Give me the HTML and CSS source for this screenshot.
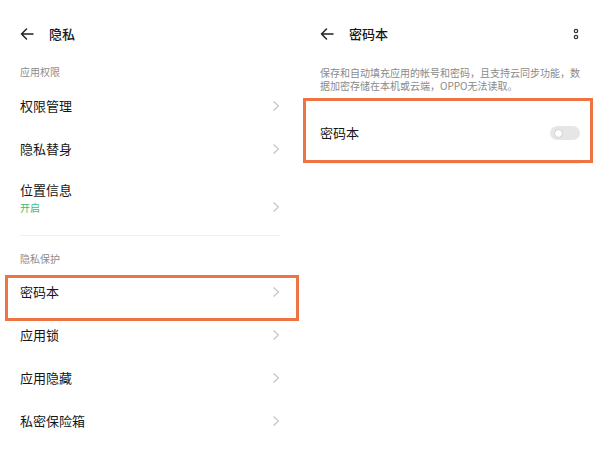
FILE: index.html
```html
<!DOCTYPE html>
<html lang="zh">
<head>
<meta charset="utf-8">
<link rel="stylesheet" href="styles.css">
</head>
<body>
<div class="screens">
  <section class="panel">
    <header class="topbar">
      <svg class="back" width="14" height="12" viewBox="0 0 14 12"><path d="M13 6H1.5M6.5 1L1.5 6l5 5" fill="none" stroke="#222" stroke-width="1.5" stroke-linecap="round" stroke-linejoin="round"/></svg>
      <span class="title">隐私</span>
    </header>
    <div class="group-title first">应用权限</div>
    <div class="row"><span class="label">权限管理</span><svg class="chev" width="8" height="12" viewBox="0 0 8 12"><path d="M1.5 1.5L6.5 6l-5 4.5" fill="none" stroke="#c6c6c6" stroke-width="1.2" stroke-linejoin="round"/></svg></div>
    <div class="row"><span class="label">隐私替身</span><svg class="chev" width="8" height="12" viewBox="0 0 8 12"><path d="M1.5 1.5L6.5 6l-5 4.5" fill="none" stroke="#c6c6c6" stroke-width="1.2" stroke-linejoin="round"/></svg></div>
    <div class="row tall">
      <div class="stack"><span class="label">位置信息</span><span class="sub">开启</span></div>
      <svg class="chev" width="8" height="12" viewBox="0 0 8 12"><path d="M1.5 1.5L6.5 6l-5 4.5" fill="none" stroke="#c6c6c6" stroke-width="1.2" stroke-linejoin="round"/></svg>
    </div>
    <div class="divider"></div>
    <div class="group-title">隐私保护</div>
    <div class="row marked"><span class="label">密码本</span><svg class="chev" width="8" height="12" viewBox="0 0 8 12"><path d="M1.5 1.5L6.5 6l-5 4.5" fill="none" stroke="#c6c6c6" stroke-width="1.2" stroke-linejoin="round"/></svg><div class="mark mark-left"></div></div>
    <div class="row"><span class="label">应用锁</span><svg class="chev" width="8" height="12" viewBox="0 0 8 12"><path d="M1.5 1.5L6.5 6l-5 4.5" fill="none" stroke="#c6c6c6" stroke-width="1.2" stroke-linejoin="round"/></svg></div>
    <div class="row"><span class="label">应用隐藏</span><svg class="chev" width="8" height="12" viewBox="0 0 8 12"><path d="M1.5 1.5L6.5 6l-5 4.5" fill="none" stroke="#c6c6c6" stroke-width="1.2" stroke-linejoin="round"/></svg></div>
    <div class="row"><span class="label">私密保险箱</span><svg class="chev" width="8" height="12" viewBox="0 0 8 12"><path d="M1.5 1.5L6.5 6l-5 4.5" fill="none" stroke="#c6c6c6" stroke-width="1.2" stroke-linejoin="round"/></svg></div>
  </section>
  <section class="panel">
    <header class="topbar">
      <svg class="back" width="14" height="12" viewBox="0 0 14 12"><path d="M13 6H1.5M6.5 1L1.5 6l5 5" fill="none" stroke="#222" stroke-width="1.5" stroke-linecap="round" stroke-linejoin="round"/></svg>
      <span class="title">密码本</span>
      <svg class="more" width="6" height="12" viewBox="0 0 6 12"><circle cx="3" cy="3" r="1.7" fill="none" stroke="#333" stroke-width="1.2"/><circle cx="3" cy="9" r="1.7" fill="none" stroke="#333" stroke-width="1.2"/></svg>
    </header>
    <p class="desc">保存和自动填充应用的帐号和密码，且支持云同步功能，数据加密存储在本机或云端，OPPO无法读取。</p>
    <div class="row switch-row marked"><span class="label">密码本</span><span class="toggle"><span class="knob"></span></span><div class="mark mark-right"></div></div>
    <div class="divider right"></div>
  </section>
</div>
</body>
</html>
```
FILE: styles.css
```css
* { box-sizing: border-box; }
html, body { margin: 0; padding: 0; background: #fff; }
body {
  font-family: "Noto Sans CJK SC", "Noto Sans", sans-serif;
  color: #161616;
  width: 600px;
  height: 450px;
  overflow: hidden;
}
.screens { display: flex; }
.panel { width: 300px; display: flex; flex-direction: column; }
.topbar {
  display: flex;
  align-items: center;
  height: 20px;
  margin-top: 24px;
  padding: 0 20px;
}
.back { flex: none; }
.title {
  margin-left: 15px;
  font-size: 13px;
  font-weight: 500;
  line-height: 20px;
  flex: 1;
}
.more { margin-right: 1px; }
.group-title {
  font-size: 10px;
  line-height: 16px;
  color: #8c8c8c;
  padding: 15px 20px 3px;
}
.group-title.first { padding-top: 20px; padding-bottom: 4px; }
.row {
  position: relative;
  height: 43px;
  display: flex;
  align-items: center;
  justify-content: space-between;
  padding: 0 20px;
}
.row.tall { height: 54px; align-items: flex-start; padding-top: 10px; }
.row.tall .chev { margin-top: 21px; }
.stack { display: flex; flex-direction: column; }
.label { font-size: 13px; line-height: 20px; }
.sub { font-size: 10px; line-height: 16px; color: #35c07c; }
.chev { flex: none; display: block; margin-right: 0; }
.divider {
  height: 1px;
  background: #f0f0f0;
  margin: 11px 20px 0;
}
.divider.right { margin-top: 1px; }
.desc {
  margin: 22px 0 0;
  padding: 0 18px 0 20px;
  font-size: 10px;
  line-height: 13px;
  color: #8a8a8a;
}
.switch-row { height: 58px; margin-top: 12px; }
.toggle {
  width: 30px;
  height: 14px;
  border-radius: 7px;
  background: #e6e6e6;
  display: flex;
  align-items: center;
  padding-left: 4px;
}
.knob {
  width: 9px;
  height: 9px;
  border-radius: 50%;
  background: #fff;
  border: 1.5px solid #cfcfcf;
}
.mark {
  position: absolute;
  border: 3px solid #ef7443;
  pointer-events: none;
}
.mark-left { left: 5px; top: 5px; width: 294px; height: 46px; }
.mark-right { left: 3px; top: -6px; width: 290px; height: 65px; }
```
